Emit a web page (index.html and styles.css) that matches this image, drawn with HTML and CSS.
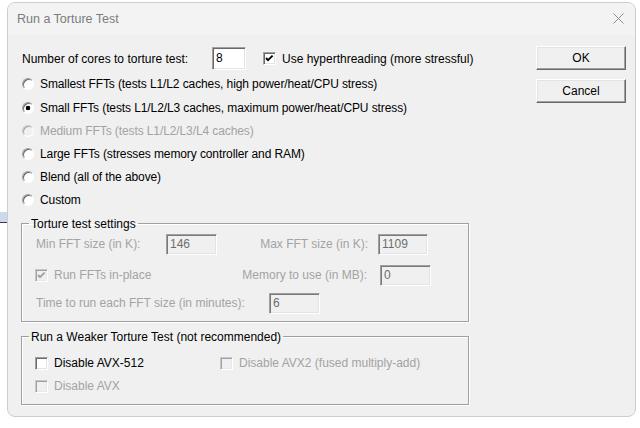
FILE: index.html
```html
<!DOCTYPE html>
<html>
<head>
<meta charset="utf-8">
<link rel="stylesheet" href="styles.css">
</head>
<body>
<div class="desk-strip"></div>
<div class="window">
  <div class="titlebar">
    <span class="title">Run a Torture Test</span>
    <svg class="close" width="11" height="11" viewBox="0 0 11 11"><path d="M0.5 0.5L10.5 10.5M10.5 0.5L0.5 10.5" stroke="#8c8c8c" stroke-width="1" fill="none"/></svg>
  </div>
  <div class="content">
    <div class="main">
      <div class="cores-row">
        <span class="cores-label">Number of cores to torture test:</span>
        <span class="edit cores-edit">8</span>
        <span class="check ht-check"><svg viewBox="0 0 11 11"><polyline points="2,5 4,7.2 8.6,2.6" stroke="#000" stroke-width="1.9" fill="none"/></svg></span>
        <span class="check-text">Use hyperthreading (more stressful)</span>
      </div>
      <div class="radios">
        <div class="radio-row"><span class="radio"></span><span>Smallest FFTs (tests L1/L2 caches, high power/heat/CPU stress)</span></div>
        <div class="radio-row"><span class="radio on"></span><span>Small FFTs (tests L1/L2/L3 caches, maximum power/heat/CPU stress)</span></div>
        <div class="radio-row disabled"><span class="radio"></span><span>Medium FFTs (tests L1/L2/L3/L4 caches)</span></div>
        <div class="radio-row"><span class="radio"></span><span>Large FFTs (stresses memory controller and RAM)</span></div>
        <div class="radio-row"><span class="radio"></span><span>Blend (all of the above)</span></div>
        <div class="radio-row"><span class="radio"></span><span>Custom</span></div>
      </div>
      <fieldset class="group settings">
        <legend>Torture test settings</legend>
        <div class="srow row-a">
          <span class="dlabel w-min">Min FFT size (in K):</span>
          <span class="edit dis w51">146</span>
          <span class="dlabel right w-max">Max FFT size (in K):</span>
          <span class="edit dis w50 ml10">1109</span>
        </div>
        <div class="srow row-b">
          <span class="inplace">
            <span class="check dis"><svg viewBox="0 0 11 11"><polyline points="2,5 4,7.2 8.6,2.6" stroke="#a0a0a0" stroke-width="1.9" fill="none"/></svg></span>
            <span class="dlabel">Run FFTs in-place</span>
          </span>
          <span class="dlabel right w-mem">Memory to use (in MB):</span>
          <span class="edit dis w51 ml13">0</span>
        </div>
        <div class="srow row-c">
          <span class="dlabel w-time">Time to run each FFT size (in minutes):</span>
          <span class="edit dis w51">6</span>
        </div>
      </fieldset>
      <fieldset class="group weaker">
        <legend>Run a Weaker Torture Test (not recommended)</legend>
        <div class="wrow">
          <span class="wcell w-avx512"><span class="check"></span><span>Disable AVX-512</span></span>
          <span class="wcell"><span class="check dis"></span><span class="dlabel">Disable AVX2 (fused multiply-add)</span></span>
        </div>
        <div class="wrow">
          <span class="wcell"><span class="check dis"></span><span class="dlabel">Disable AVX</span></span>
        </div>
      </fieldset>
    </div>
    <div class="buttons">
      <button class="btn">OK</button>
      <button class="btn">Cancel</button>
    </div>
  </div>
</div>
</body>
</html>
```

FILE: styles.css
```css
html, body {
  margin: 0;
  padding: 0;
  background: #ffffff;
}
body {
  font-family: "Liberation Sans", Arial, sans-serif;
  font-size: 12px;
  color: #000;
  width: 640px;
  height: 428px;
  overflow: hidden;
  padding-top: 2px;
  box-sizing: border-box;
}
.desk-strip {
  position: absolute;
  left: 0;
  top: 212px;
  width: 7px;
  height: 10px;
  background: #cbd9ea;
  border-bottom: 1px solid #3a3a3a;
}
.window {
  margin-left: 7px;
  width: 629px;
  height: 415px;
  box-sizing: border-box;
  border: 1px solid #cdcdcd;
  border-radius: 8px;
  background: #f0f0f0;
  overflow: hidden;
  display: flex;
  flex-direction: column;
}
.titlebar {
  height: 32px;
  flex: none;
  display: flex;
  align-items: center;
  padding-left: 9px;
  padding-bottom: 1px;
  box-sizing: border-box;
  background: #f3f3f3;
}
.title {
  font-size: 12.5px;
  color: #7c7c7c;
}
.close {
  margin-left: auto;
  margin-right: 11px;
  display: block;
}
.content {
  flex: 1;
  display: flex;
}
.main {
  flex: 1;
  padding: 12px 0 0 14px;
}
.cores-row {
  height: 23px;
  display: flex;
  align-items: center;
}
.cores-label {
  width: 190px;
}
.edit {
  box-sizing: border-box;
  height: 21px;
  border: 1px solid;
  border-color: #a0a0a0 #ffffff #ffffff #a0a0a0;
  box-shadow: inset 1px 1px 0 #696969, inset -1px -1px 0 #e3e3e3;
  background: #fff;
  padding: 0 3px;
  line-height: 19px;
  display: block;
}
.cores-edit {
  width: 34px;
  height: 23px;
  line-height: 21px;
}
.edit.dis {
  background: #f0f0f0;
  color: #6d6d6d;
  box-shadow: inset 1px 1px 0 #7a7a7a, inset -1px -1px 0 #e3e3e3;
}
.w51 { width: 51px; }
.w50 { width: 50px; }
.ml10 { margin-left: 10px; }
.ml13 { margin-left: 13px; }
.check {
  box-sizing: border-box;
  width: 13px;
  height: 13px;
  flex: none;
  border: 1px solid;
  border-color: #a0a0a0 #ffffff #ffffff #a0a0a0;
  box-shadow: inset 1px 1px 0 #696969, inset -1px -1px 0 #e3e3e3;
  background: #fff;
  display: block;
}
.check svg {
  display: block;
  width: 11px;
  height: 11px;
}
.check.dis {
  background: #f0f0f0;
  border-color: #c8c8c8 #ffffff #ffffff #c8c8c8;
  box-shadow: inset 1px 1px 0 #a0a0a0, inset -1px -1px 0 #e8e8e8;
}
.ht-check {
  margin-left: 17px;
}
.check-text {
  margin-left: 6px;
}
.radios {
  margin-top: 2.8px;
}
.radio-row {
  height: 23.2px;
  display: flex;
  align-items: center;
  letter-spacing: -0.1px;
}
.radio {
  box-sizing: border-box;
  width: 12px;
  height: 12px;
  flex: none;
  border-radius: 50%;
  border: 1px solid;
  border-color: #a0a0a0 #ffffff #ffffff #a0a0a0;
  box-shadow: inset 1px 1px 0 #696969;
  background: #fff;
  margin-right: 6px;
}
.radio.on {
  background: radial-gradient(circle at 50% 50%, #000 0, #000 2px, #fff 2.6px);
}
.radio-row.disabled {
  color: #a3a3a3;
}
.radio-row.disabled .radio {
  background: #f0f0f0;
  box-shadow: inset 1px 1px 0 #a8a8a8;
  border-color: #c8c8c8 #ffffff #ffffff #c8c8c8;
}
.group {
  box-sizing: border-box;
  width: 448px;
  margin: 0 0 0 -1px;
  padding: 0 0 7px 14px;
  border: 1px solid #a0a0a0;
  box-shadow: inset 1px 1px 0 #ffffff, 1px 1px 0 #ffffff;
  min-width: 0;
}
.group legend {
  padding: 0 2px;
  margin-left: -7px;
  line-height: 14px;
  font-size: 12px;
}
.settings {
  margin-top: 5px;
}
.dlabel {
  color: #a3a3a3;
}
.right {
  text-align: right;
}
.srow {
  display: flex;
  align-items: center;
  height: 21px;
}
.row-a { margin-top: 3px; }
.row-b { margin-top: 10px; }
.row-c { margin-top: 7px; }
.w-min { width: 130px; }
.w-max { width: 151px; }
.inplace {
  width: 180px;
  display: flex;
  align-items: center;
  gap: 6px;
  margin-left: -1px;
}
.w-mem { width: 152px; }
.w-time { width: 233px; }
.weaker {
  margin-top: 8px;
}
.wrow {
  height: 23px;
  display: flex;
  align-items: center;
}
.wrow:first-of-type {
  margin-top: 8px;
}
.weaker {
  padding-bottom: 6px;
}
.wcell {
  display: flex;
  align-items: center;
  gap: 6px;
  margin-left: -1px;
}
.w-avx512 {
  width: 186px;
}
.buttons {
  width: 90px;
  flex: none;
  margin-right: 9px;
  padding-top: 11px;
  display: flex;
  flex-direction: column;
  gap: 9px;
}
.btn {
  box-sizing: border-box;
  width: 90px;
  height: 24px;
  padding: 0;
  margin: 0;
  font-family: "Liberation Sans", Arial, sans-serif;
  font-size: 12px;
  color: #000;
  background: #f0f0f0;
  border: 1px solid;
  border-color: #ffffff #696969 #696969 #ffffff;
  box-shadow: inset -1px -1px 0 #a0a0a0, inset 1px 1px 0 #e3e3e3;
  border-radius: 0;
}
```
